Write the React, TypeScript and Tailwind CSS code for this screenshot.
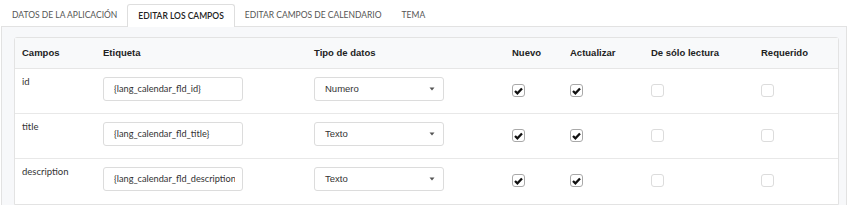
import React from 'react';

const tabs = ['DATOS DE LA APLICACIÓN', 'EDITAR LOS CAMPOS', 'EDITAR CAMPOS DE CALENDARIO', 'TEMA'];

const rows = [
  { name: 'id', label: '{lang_calendar_fld_id}', type: 'Numero' },
  { name: 'title', label: '{lang_calendar_fld_title}', type: 'Texto' },
  { name: 'description', label: '{lang_calendar_fld_description}', type: 'Texto' },
];

const grid = 'grid grid-cols-[81px_211px_198px_58px_81px_110px_1fr]';

const Check: React.FC<{ checked?: boolean }> = ({ checked }) => (
  <span
    className={`w-[13px] h-[13px] rounded-[3px] border flex items-center justify-center bg-white ${
      checked ? 'border-[#a9a9a9]' : 'border-[#dcdcdc]'
    }`}
  >
    {checked && (
      <svg width="9" height="8" viewBox="0 0 9 8">
        <path d="M1 4 L3.4 6.3 L8 1.5" fill="none" stroke="#111" strokeWidth="2.3" />
      </svg>
    )}
  </span>
);

export default function App() {
  return (
    <div className="w-[850px] h-[205px] bg-white overflow-hidden font-['Lato',sans-serif] text-[#333]">
      {/* Tabs */}
      <div className="flex items-end h-[26px] pl-[2px] pt-[4px]">
        {tabs.map((t, i) => (
          <div
            key={t}
            className={`flex items-center px-[10px] text-[8.5px] ${
              i === 1
                ? 'bg-white border border-b-0 border-[#dedede] rounded-t-[3px] text-[#222] font-semibold mb-[-1px] relative z-10 h-[23px]'
                : 'text-[#555] h-[22px]'
            }`}
          >
            {t}
          </div>
        ))}
      </div>

      {/* Panel */}
      <div className="border-t border-l border-r border-[#e2e2e2] bg-[#f7f8fa] h-[179px] ml-[1px] mr-[3px] pt-[10px] pl-[12px] pr-[7px]">
        <div className="bg-white border border-[#e3e3e3] rounded-t-[3px] h-full">
          <div className={`${grid} h-[31px] items-center bg-[#f8f9fa] border-b border-[#e6e6e6] font-['Liberation_Sans',Arial,sans-serif] font-bold text-[9.5px] text-[#222]`}>
            {['Campos', 'Etiqueta', 'Tipo de datos', 'Nuevo', 'Actualizar', 'De sólo lectura', 'Requerido'].map((h) => (
              <div key={h} className="px-[7px]">
                {h}
              </div>
            ))}
          </div>
          {rows.map((r, i) => (
            <div
              key={r.name}
              className={`${grid} h-[45px] pt-[8px] ${i < rows.length - 1 ? 'border-b border-[#e8e8e8]' : ''}`}
            >
              <div className="px-[7px] text-[9.5px] leading-none">{r.name}</div>
              <div className="px-[7px]">
                <div className="w-[140px] h-[24px] border border-[#dcdcdc] rounded-[3px] flex items-center pl-[10px] pr-[7px] text-[9.2px]">
                  <span className="block w-full overflow-hidden whitespace-nowrap">{r.label}</span>
                </div>
              </div>
              <div className="px-[7px]">
                <div className="w-[130px] h-[24px] border border-[#dcdcdc] rounded-[3px] flex items-center justify-between pl-[10px] pr-[8px] text-[9.5px] font-['Liberation_Sans',Arial,sans-serif]">
                  <span>{r.type}</span>
                  <svg width="6" height="4" viewBox="0 0 6 4">
                    <path d="M0.5 0.5 L5.5 0.5 L3 3.5 Z" fill="#555" />
                  </svg>
                </div>
              </div>
              <div className="px-[7px] pt-[7px]">
                <Check checked />
              </div>
              <div className="px-[7px] pt-[7px]">
                <Check checked />
              </div>
              <div className="px-[7px] pt-[7px]">
                <Check />
              </div>
              <div className="px-[7px] pt-[7px]">
                <Check />
              </div>
            </div>
          ))}
        </div>
      </div>
    </div>
  );
}
